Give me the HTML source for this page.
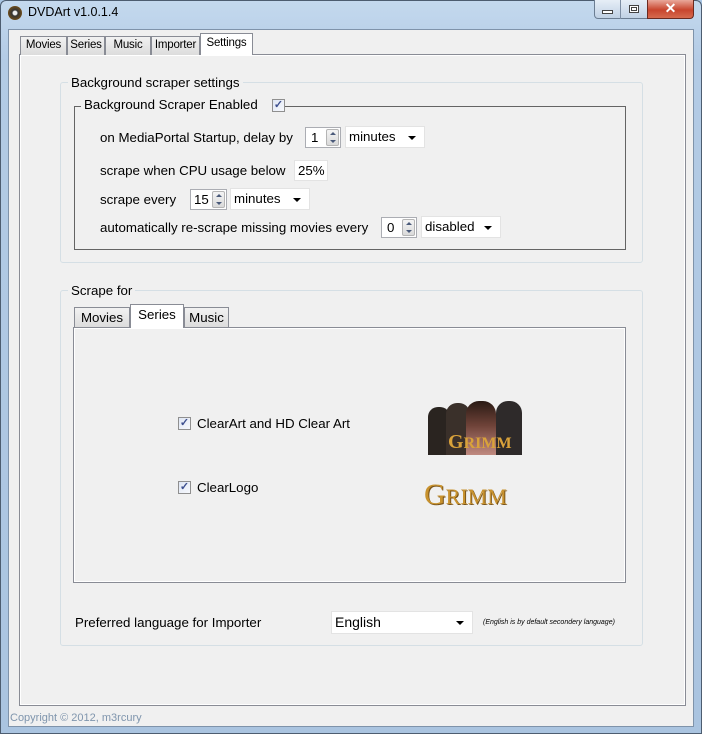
<!DOCTYPE html>
<html><head><meta charset="utf-8"><style>
*{box-sizing:border-box;margin:0;padding:0}
body{width:702px;height:734px;overflow:hidden;background:#a9c6e4;font-family:"Liberation Sans",sans-serif;font-size:13.3px;color:#000;position:relative}
.a{position:absolute}
.frame{left:0;top:0;width:702px;height:734px;background:linear-gradient(180deg,#c4d9ee 0,#b3cbe5 60px,#aac4e0 100%);border:1px solid #4d5d70;border-radius:6px 6px 0 0}
.client{left:8px;top:29px;width:686px;height:698px;background:#f0f0f0;border:1px solid #7f93aa}
.tab{top:36px;height:19px;border:1px solid #898c95;border-bottom:none;background:linear-gradient(#f2f2f2,#dcdcdc);font-size:11.5px;text-align:center;line-height:17px;letter-spacing:-0.2px}
.sel{background:#fff;top:33px;height:22px;z-index:2}
.page{left:19px;top:54px;width:667px;height:652px;border:1px solid #898c95;background:#f0f0f0;box-shadow:inset 0 0 0 1px #fff}
.grp{border:1px solid #d5dfe5;border-radius:3px}
.lbl{background:#f0f0f0;padding:0 3px;white-space:nowrap}
.box{background:#fff;border:1px solid #abadb3;height:21px;line-height:19px;padding-left:4px}
.spin{border:1px solid #abadb3;background:#fff;height:21px;line-height:19px;padding-left:5px}
.spin i{position:absolute;right:1px;top:1px;width:13px;height:17px;background:linear-gradient(#f4f4f4,#dadada);border:1px solid #b5b5b5;border-radius:2px}
.spin i:before{content:"";position:absolute;left:3px;top:2px;border:3px solid transparent;border-bottom:3px solid #4a5a7a;border-top:none}
.spin i:after{content:"";position:absolute;left:3px;top:10px;border:3px solid transparent;border-top:3px solid #4a5a7a;border-bottom:none}
.dd{background:#fff;border:1px solid #e3e3e3;height:22px;line-height:20px;padding-left:3px}
.dd:after{content:"";position:absolute;right:8px;top:9px;border:4px solid transparent;border-top:4px solid #000;border-bottom:none}
.cb{width:13px;height:13px;border:1px solid #8f8f8f;background:linear-gradient(135deg,#dfe6f4,#f6f8fc);font-size:11px;line-height:11px;text-align:center;color:#3d4f8f;font-weight:bold}
.itab{top:307px;height:20px;border:1px solid #898c95;border-bottom:none;background:linear-gradient(#f2f2f2,#dcdcdc);text-align:center;line-height:20px}
</style></head><body>
<div class="a frame"></div>
<div class="a" style="left:8px;top:6px;width:14px;height:14px;border-radius:50%;background:radial-gradient(#eee 20%,#333 30%,#6b4a1a 70%,#c08a2a)"></div>
<div class="a" style="left:28px;top:5px;font-size:12.5px">DVDArt v1.0.1.4</div>
<div class="a" style="left:594px;top:0;width:54px;height:19px;border:1px solid #6b7d92;border-top:none;border-radius:0 0 0 4px;background:linear-gradient(#e6eef7,#c0d1e4)"></div>
<div class="a" style="left:620px;top:0;width:1px;height:19px;background:#7d8ea3"></div>
<div class="a" style="left:602px;top:10px;width:11px;height:4px;background:#fff;border:1px solid #444"></div>
<div class="a" style="left:629px;top:5px;width:10px;height:8px;background:#fff;border:1px solid #444;box-shadow:inset 0 0 0 1px #fff,inset 0 0 0 2px #444"></div>
<div class="a" style="left:647px;top:0;width:47px;height:19px;border:1px solid #6b2a20;border-top:none;border-radius:0 0 4px 0;background:linear-gradient(#e9a89a,#c8452e 55%,#d66a4e);color:#fff;font-weight:bold;text-align:center;line-height:17px;font-size:14px">✕</div>
<div class="a client"></div>
<div class="a page"></div>
<div class="a tab" style="left:20px;width:47px">Movies</div>
<div class="a tab" style="left:67px;width:38px">Series</div>
<div class="a tab" style="left:105px;width:46px">Music</div>
<div class="a tab" style="left:151px;width:49px">Importer</div>
<div class="a tab sel" style="left:200px;width:53px;line-height:18px">Settings</div>

<div class="a grp" style="left:60px;top:82px;width:583px;height:181px"></div>
<div class="a lbl" style="left:68px;top:75px">Background scraper settings</div>
<div class="a" style="left:74px;top:106px;width:552px;height:144px;border:1px solid #646464"></div>
<div class="a lbl" style="left:81px;top:97px;padding-right:22px">Background Scraper Enabled</div>
<div class="a cb" style="left:272px;top:99px">✓</div>

<div class="a" style="left:100px;top:130px">on MediaPortal Startup, delay by</div>
<div class="a spin" style="left:305px;top:127px;width:36px">1<i></i></div>
<div class="a dd" style="left:345px;top:126px;width:80px">minutes</div>
<div class="a" style="left:100px;top:163px">scrape when CPU usage below</div>
<div class="a box" style="left:294px;top:160px;width:34px;padding-left:3px;border-color:#e3e3e3">25%</div>
<div class="a" style="left:100px;top:192px">scrape every</div>
<div class="a spin" style="left:190px;top:189px;width:37px;padding-left:3px">15<i></i></div>
<div class="a dd" style="left:230px;top:188px;width:80px">minutes</div>
<div class="a" style="left:100px;top:220px">automatically re-scrape missing movies every</div>
<div class="a spin" style="left:381px;top:217px;width:36px">0<i></i></div>
<div class="a dd" style="left:421px;top:216px;width:80px">disabled</div>

<div class="a grp" style="left:60px;top:290px;width:583px;height:356px"></div>
<div class="a lbl" style="left:68px;top:283px">Scrape for</div>
<div class="a" style="left:73px;top:327px;width:553px;height:256px;border:1px solid #898c95;box-shadow:inset 0 0 0 1px #fff"></div>
<div class="a itab" style="left:74px;width:56px">Movies</div>
<div class="a itab" style="left:184px;width:45px">Music</div>
<div class="a itab" style="left:130px;width:54px;top:304px;height:24px;background:#fff;z-index:2">Series</div>

<div class="a cb" style="left:178px;top:417px">✓</div>
<div class="a" style="left:197px;top:416px">ClearArt and HD Clear Art</div>
<div class="a" style="left:426px;top:399px;width:96px;height:56px;overflow:hidden">
 <div class="a" style="left:2px;top:8px;width:22px;height:48px;border-radius:10px 10px 0 0;background:#2a2420"></div>
 <div class="a" style="left:20px;top:4px;width:24px;height:52px;border-radius:11px 11px 0 0;background:#3a302a"></div>
 <div class="a" style="left:40px;top:2px;width:30px;height:54px;border-radius:13px 13px 0 0;background:linear-gradient(#2a1a14,#6e4238 45%,#c08a80)"></div>
 <div class="a" style="left:70px;top:2px;width:26px;height:54px;border-radius:12px 12px 0 0;background:#2e2a2a"></div>
 <div class="a" style="left:22px;top:32px;font-family:'Liberation Serif',serif;font-size:20px;color:#d9a23a;font-weight:bold">G<span style="font-size:16px">RIMM</span></div>
</div>
<div class="a cb" style="left:178px;top:481px">✓</div>
<div class="a" style="left:197px;top:480px">ClearLogo</div>
<div class="a" style="left:424px;top:478px;font-family:'Liberation Serif',serif;font-size:30px;color:#c8922e;letter-spacing:0px;text-shadow:1px 1px 0 #7a5418">G<span style="font-size:22px">RIMM</span></div>

<div class="a" style="left:75px;top:615px">Preferred language for Importer</div>
<div class="a dd" style="left:331px;top:611px;width:142px;height:23px;line-height:21px;font-size:14px">English</div>
<div class="a" style="left:483px;top:619px;font-size:7px;font-style:italic">(English is by default secondery language)</div>
<div class="a" style="left:10px;top:712px;font-size:11px;color:#7f95ad">Copyright © 2012, m3rcury</div>
</body></html>
